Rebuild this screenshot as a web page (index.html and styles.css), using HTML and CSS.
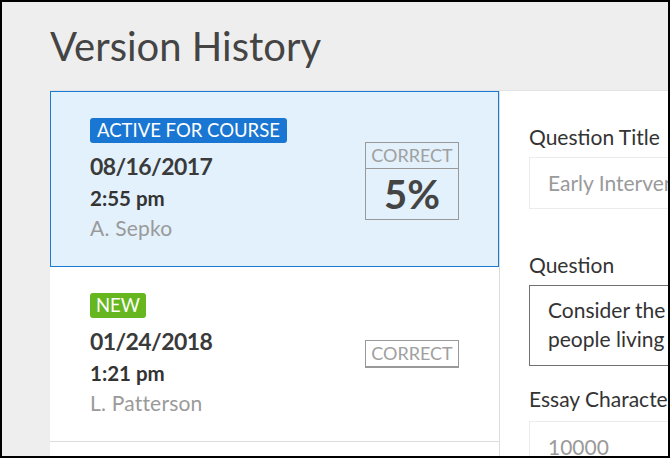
FILE: index.html
```html
<!DOCTYPE html>
<html>
<head>
<meta charset="utf-8">
<link rel="stylesheet" href="styles.css">
</head>
<body>
<div class="frame">
  <h1 class="title">Version History</h1>
  <div class="main">
    <div class="versions">
      <div class="version active">
        <div class="info">
          <span class="badge badge-blue">ACTIVE FOR COURSE</span>
          <div class="date">08/16/2017</div>
          <div class="time">2:55 pm</div>
          <div class="author">A. Sepko</div>
        </div>
        <div class="score">
          <div class="score-label">CORRECT</div>
          <div class="score-value">5%</div>
        </div>
      </div>
      <div class="version">
        <div class="info">
          <span class="badge badge-green">NEW</span>
          <div class="date">01/24/2018</div>
          <div class="time">1:21 pm</div>
          <div class="author">L. Patterson</div>
        </div>
        <div class="score score-empty">
          <div class="score-label">CORRECT</div>
        </div>
      </div>
    </div>
    <div class="detail">
      <div class="label label-first">Question Title</div>
      <div class="input muted input-title">Early Intervention</div>
      <div class="label">Question</div>
      <div class="textarea">Consider the<br>people living</div>
      <div class="label label-last">Essay Character Limit</div>
      <div class="input muted">10000</div>
    </div>
  </div>
</div>
</body>
</html>
```
FILE: styles.css
```css
html, body {
  margin: 0;
  padding: 0;
  background: #000;
}
body {
  padding: 2px;
  width: 666px;
  height: 454px;
  font-family: "Lato", "Liberation Sans", sans-serif;
}
.frame {
  width: 666px;
  height: 454px;
  background: #eeeeee;
  overflow: hidden;
  display: flex;
  flex-direction: column;
}
.title {
  margin: 0;
  padding: 20px 0 0 48px;
  height: 88px;
  flex: none;
  box-sizing: border-box;
  font-size: 40px;
  font-weight: 400;
  color: #444;
  line-height: 48px;
}
.main {
  display: flex;
  flex: 1;
  margin-left: 48px;
  border-top: 1px solid #e2e2e2;
  min-height: 0;
}
.versions {
  width: 449px;
  flex: none;
  background: #fff;
  border-right: 1px solid #dcdcdc;
}
.version {
  display: flex;
  align-items: center;
  justify-content: space-between;
  height: 175px;
  box-sizing: border-box;
  padding: 0 40px;
  border-bottom: 1px solid #dcdcdc;
}
.version.active {
  background: #e3f1fc;
  border: 1px solid #1a7bd4;
  height: 176px;
  padding: 0 39px;
}
.info {
  align-self: flex-start;
  display: flex;
  flex-direction: column;
  align-items: flex-start;
  padding-top: 26px;
}
.badge {
  display: inline-block;
  color: #fff;
  font-size: 18.5px;
  line-height: 25px;
  height: 25px;
  padding: 0 7px;
  border-radius: 3px;
  margin-bottom: 9px;
}
.badge-blue { background: #1976d2; }
.badge-green { background: #66b71f; padding: 0 6px; }
.date {
  font-size: 23px;
  font-weight: 700;
  color: #3a3a3a;
  line-height: 28px;
  letter-spacing: -0.6px;
  margin-bottom: 4px;
}
.time {
  font-size: 20.5px;
  font-weight: 700;
  color: #333;
  line-height: 28px;
  margin-bottom: 2px;
}
.author {
  font-size: 21px;
  color: #9a9a9a;
  line-height: 28px;
  letter-spacing: 0.2px;
}
.score {
  width: 94px;
  flex: none;
  box-sizing: border-box;
  border: 1px solid #999;
  text-align: center;
}
.active .score {
  margin-top: 3px;
}
.score-label {
  font-size: 18px;
  line-height: 25px;
  color: #a0a0a0;
  border-bottom: 1px solid #999;
}
.score-empty {
  border-bottom: 2px solid #999;
}
.score-empty .score-label {
  border-bottom: none;
}
.score-value {
  font-size: 40px;
  font-weight: 700;
  color: #444;
  line-height: 50px;
}
.detail {
  flex: 1;
  background: #fff;
  padding: 32px 0 0 29px;
  white-space: nowrap;
  overflow: hidden;
}
.label {
  font-size: 21px;
  color: #333;
  line-height: 28px;
  margin-bottom: 6px;
}
.label-last {
  margin-bottom: 8px;
}
.input {
  border: 1px solid #ececec;
  height: 52px;
  box-sizing: border-box;
  padding: 0 18px;
  font-size: 21px;
  line-height: 50px;
  width: 320px;
}
.input-title {
  margin-bottom: 42px;
}
.muted { color: #9a9a9a; }
.textarea {
  border: 1px solid #707070;
  height: 81px;
  box-sizing: border-box;
  padding: 9px 18px 0;
  font-size: 21px;
  line-height: 29px;
  color: #333;
  width: 320px;
  margin-bottom: 19px;
}
```
